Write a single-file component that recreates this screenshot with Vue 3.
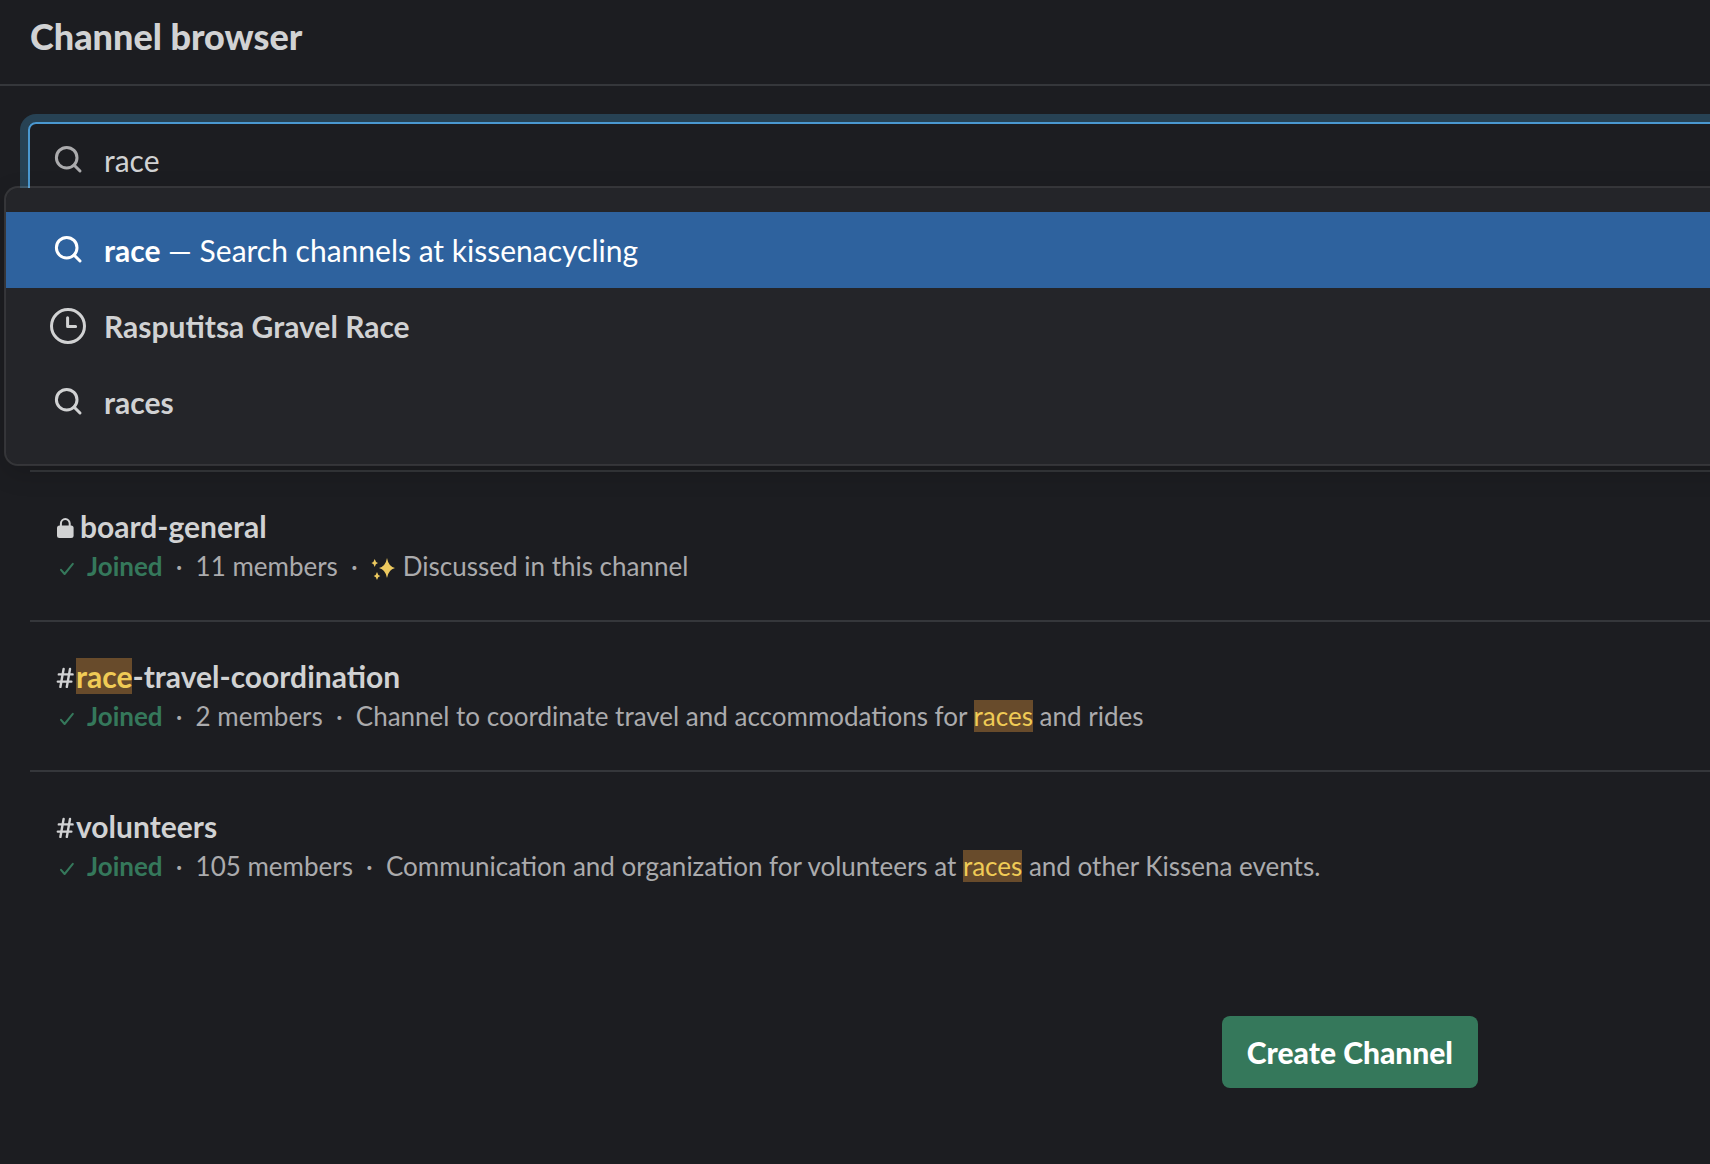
<script setup>
import { ref } from 'vue'

const query = ref('race')

const suggestions = [
  { icon: 'search', text: 'race', hint: ' — Search channels at kissenacycling', active: true },
  { icon: 'clock', text: 'Rasputitsa Gravel Race' },
  { icon: 'search', text: 'races' },
]

const channels = [
  {
    id: 'board-general',
    locked: true,
    name: [{ t: 'board-general' }],
    members: '11 members',
    sparkle: true,
    about: [{ t: 'Discussed in this channel' }],
  },
  {
    id: 'race-travel-coordination',
    name: [{ t: 'race', hit: true }, { t: '-travel-coordination' }],
    members: '2 members',
    about: [
      { t: 'Channel to coordinate travel and accommodations for ' },
      { t: 'races', hit: true },
      { t: ' and rides' },
    ],
  },
  {
    id: 'volunteers',
    name: [{ t: 'volunteers' }],
    members: '105 members',
    about: [
      { t: 'Communication and organization for volunteers at ' },
      { t: 'races', hit: true },
      { t: ' and other Kissena events.' },
    ],
  },
]
</script>

<template>
  <div class="page">
    <header class="header">
      <h1 class="title">Channel browser</h1>
    </header>

    <main class="content">
      <div class="search">
        <label class="box">
          <svg class="icon" viewBox="0 0 36 36" aria-hidden="true">
            <circle cx="16.7" cy="15.7" r="10.3" />
            <path d="M24 23l6 6" />
          </svg>
          <input v-model="query" class="field" type="text" aria-label="Search channels" />
        </label>
        <ul class="menu" role="listbox" aria-label="Suggestions">
          <li
            v-for="s in suggestions"
            :key="s.text"
            class="option"
            :class="{ active: s.active }"
            role="option"
            :aria-selected="!!s.active"
          >
            <svg v-if="s.icon === 'search'" class="icon" viewBox="0 0 36 36" aria-hidden="true">
              <circle cx="16.7" cy="15.7" r="10.3" />
              <path d="M24 23l6 6" />
            </svg>
            <svg v-else class="icon" viewBox="0 0 36 36" aria-hidden="true">
              <circle cx="18" cy="18" r="16.5" />
              <path d="M17.6 9.8v8.8h8" />
            </svg>
            <span class="option-text"><b>{{ s.text }}</b>{{ s.hint }}</span>
          </li>
        </ul>
      </div>

      <ul class="channels">
        <li v-for="c in channels" :key="c.id" class="channel">
          <a class="name" :href="'#' + c.id">
            <svg v-if="c.locked" class="lock" viewBox="0 0 24 24" aria-hidden="true">
              <rect x="1" y="11.500" width="16.600" height="12.500" rx="2.500" />
              <path d="M4.900 12.500V9.600a4.400 4.600 0 0 1 8.800 0v2.900" />
            </svg>
            <svg v-else class="hash" viewBox="0 0 20 24" aria-hidden="true">
              <path d="M7.600 5L4.400 23M14 5L10.800 23M2.800 10.400H16.600M1.800 17.600H15.400" />
            </svg>
            <span><component :is="p.hit ? 'mark' : 'span'" v-for="p in c.name" :key="p.t" class="part">{{ p.t }}</component></span>
          </a>
          <div class="meta">
            <svg class="check" viewBox="0 0 20 20" aria-hidden="true">
              <path d="M5 13.800l3.600 4.200L16.800 7.800" />
            </svg>
            <strong class="joined">Joined</strong>
            <span class="dot">·</span>
            <span>{{ c.members }}</span>
            <span class="dot">·</span>
            <svg v-if="c.sparkle" class="sparkle" viewBox="0 0 24 28" aria-hidden="true">
              <path d="M16 6q1.500 8.500 8 10-6.500 1.500-8 10-1.500-8.500-8-10 6.500-1.500 8-10z" />
              <path d="M3.700 7q.7 3.300 3.300 4-2.600.7-3.300 4-.7-3.300-3.300-4 2.600-.7 3.300-4z" />
              <path d="M6 20q.7 3.300 3.300 4-2.600.7-3.300 4-.7-3.300-3.300-4 2.600-.7 3.300-4z" />
            </svg>
            <span><component :is="p.hit ? 'mark' : 'span'" v-for="p in c.about" :key="p.t" class="part">{{ p.t }}</component></span>
          </div>
        </li>
      </ul>

      <div class="actions">
        <button class="create" type="button">Create Channel</button>
      </div>
    </main>
  </div>
</template>

<style>
body {
  margin: 0;
  background: #1c1d21;
}
</style>

<style scoped>
.page {
  min-height: 100vh;
  overflow: hidden;
  background: #1c1d21;
  color: #d1d2d3;
  font-family: Lato, "Liberation Sans", sans-serif;
  font-size: 30px;
  line-height: 44px;
}

.header {
  padding: 10px 30px 22px;
  border-bottom: 2px solid #35373b;
}

.title {
  margin: 0;
  font-size: 36px;
  font-weight: 900;
  line-height: 52px;
}

.content {
  padding-top: 36px;
}

.search {
  position: relative;
  margin: 0 -16px 272px 28px;
}

.box {
  display: flex;
  align-items: center;
  gap: 18px;
  height: 72px;
  padding-left: 20px;
  border: 2px solid #4a98d0;
  border-radius: 8px;
  box-shadow: 0 0 0 8px #274254;
}

.box .icon {
  color: #ababad;
}

.icon {
  flex: none;
  width: 36px;
  height: 36px;
  fill: none;
  stroke: currentColor;
  stroke-width: 3;
  stroke-linecap: round;
  stroke-linejoin: round;
}

.field {
  flex: 1;
  min-width: 0;
  padding: 0;
  border: 0;
  outline: 0;
  background: none;
  color: #d1d2d3;
  font: inherit;
}

.menu {
  position: absolute;
  top: 64px;
  left: -24px;
  right: -16px;
  margin: 0;
  padding: 24px 0;
  border: 2px solid rgba(209, 210, 211, 0.14);
  border-radius: 14px;
  background: #242529;
  background-clip: padding-box;
  box-shadow: 0 8px 24px rgba(0, 0, 0, 0.15);
  list-style: none;
}

.option {
  display: flex;
  align-items: center;
  gap: 18px;
  height: 76px;
  padding-left: 44px;
}

.option.active {
  background: #2e629e;
  color: #fff;
}

.option-text {
  white-space: pre;
}

.channels {
  margin: 0 0 0 30px;
  padding: 0;
  list-style: none;
}

.channel {
  padding: 32px 26px 36px;
  border-top: 2px solid #35373b;
}

.name {
  display: flex;
  align-items: center;
  color: inherit;
  font-weight: 700;
  text-decoration: none;
}

.lock,
.hash {
  height: 24px;
  fill: none;
  stroke: currentColor;
}

.lock {
  width: 24px;
  stroke-width: 2;
}

.lock rect {
  fill: currentColor;
  stroke: none;
}

.hash {
  width: 20px;
  stroke-width: 2.4;
  stroke-linecap: round;
}

.part {
  white-space: pre;
}

mark {
  background: #684b2b;
  color: #f0cb56;
}

.meta {
  display: flex;
  align-items: center;
  color: #ababad;
  font-size: 26px;
  line-height: 36px;
}

.check {
  width: 20px;
  height: 20px;
  margin-right: 11px;
  fill: none;
  stroke: #35785b;
  stroke-width: 2;
  stroke-linecap: round;
  stroke-linejoin: round;
}

.joined {
  color: #35785b;
  font-weight: 700;
}

.dot {
  width: 33px;
  text-align: center;
}

.sparkle {
  width: 24px;
  height: 28px;
  margin-right: 8px;
  fill: #ecc95f;
}

.actions {
  display: flex;
  justify-content: flex-end;
  padding: 96px 232px 76px 0;
}

.create {
  height: 72px;
  padding: 0 25px;
  border: 0;
  border-radius: 8px;
  background: #35785b;
  color: #fff;
  font: inherit;
  font-weight: 900;
}
</style>
